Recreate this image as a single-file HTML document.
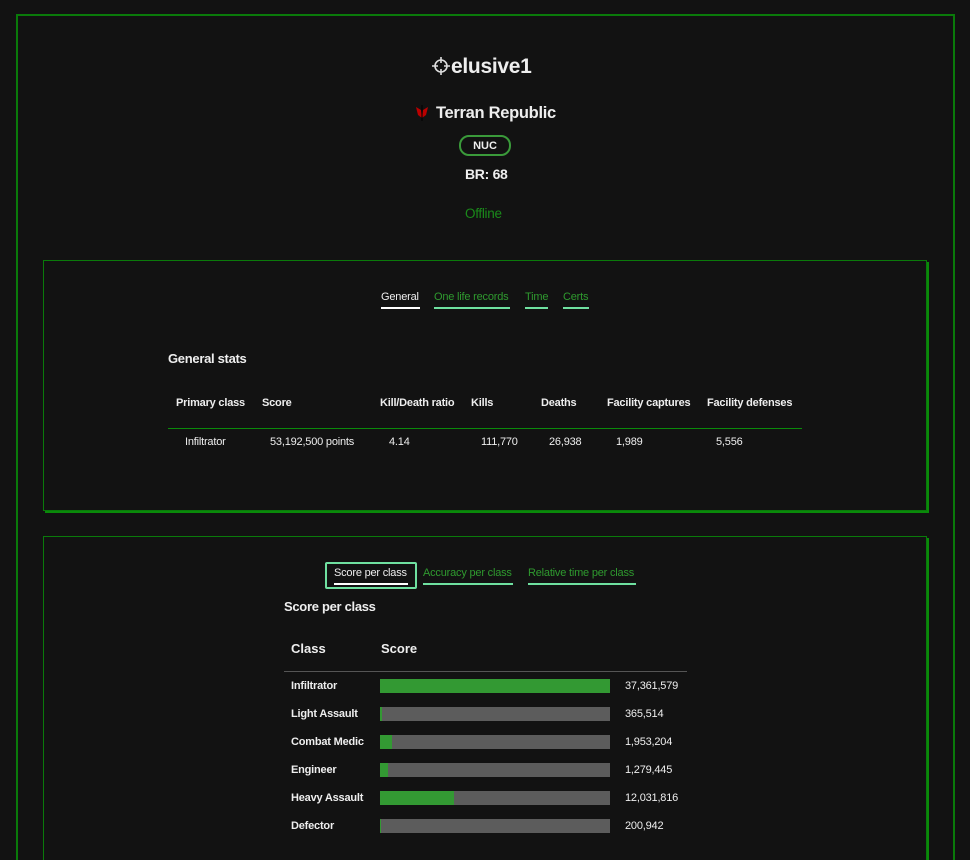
<!DOCTYPE html><html style="overflow:hidden;height:860px"><head><style>
html,body{margin:0;background:#121212;width:970px;height:860px;overflow:hidden}
body{font-family:"Liberation Sans",sans-serif;color:#eee;position:relative}
.a{position:absolute;white-space:nowrap}
.b{font-weight:bold}
.outer{position:absolute;left:16px;top:14px;width:935px;height:860px;border:2px solid #0a7a0a}
.panel{position:absolute;left:43px;width:882px;border:1px solid #0a7a0a;box-shadow:2px 2px 0 #0a8a0a}
.g{color:#2f9a2f}
.ul{position:absolute;height:2px;background:#6fe0a0}
.bar{position:absolute;left:380px;width:230px;height:14px;background:#5c5c5c}
.bar i{display:block;height:100%;background:#339933}
.s11{font-size:11px;letter-spacing:-0.2px}
</style></head><body>
<div class="outer"></div>
<svg class="a" style="left:432px;top:57px" width="18" height="18" viewBox="0 0 18 18" fill="none" stroke="#ddd" stroke-width="1.6"><circle cx="9" cy="9" r="6"/><path d="M9 0v6M9 12v6M0 9h6M12 9h6"/></svg>
<div class="a b" style="left:451px;top:55px;font-size:21px;letter-spacing:-0.3px">elusive1</div>
<svg class="a" style="left:416px;top:105px" width="12" height="16" viewBox="0 0 12 16"><path d="M0 2l5 3 1 9 1-9 5-3-2 8-4 3-4-3z" fill="#b00"/><path d="M6 0v16" stroke="#000" stroke-width="1"/></svg>
<div class="a b" style="left:436px;top:104px;font-size:16.5px;letter-spacing:-0.3px">Terran Republic</div>
<div class="a b" style="left:459px;top:135px;width:48px;height:17px;border:2px solid #3a9a3a;border-radius:10px;font-size:11px;text-align:center;line-height:19px">NUC</div>
<div class="a b" style="left:465px;top:166px;font-size:14px;letter-spacing:-0.3px">BR: 68</div>
<div class="a" style="left:465px;top:206px;font-size:13.5px;color:#1a8a1a;letter-spacing:-0.3px">Offline</div>

<div class="panel" style="top:260px;height:249px"></div>
<div class="a s11" style="left:381px;top:291px">General</div><div class="ul" style="left:381px;top:307px;width:39px;background:#fff"></div>
<div class="a s11 g" style="left:434px;top:291px">One life records</div><div class="ul" style="left:434px;top:307px;width:76px"></div>
<div class="a s11 g" style="left:525px;top:291px">Time</div><div class="ul" style="left:525px;top:307px;width:23px"></div>
<div class="a s11 g" style="left:563px;top:291px">Certs</div><div class="ul" style="left:563px;top:307px;width:26px"></div>
<div class="a b" style="left:168px;top:351px;font-size:13px;letter-spacing:-0.3px">General stats</div>
<div class="a b s11" style="left:176px;top:397px">Primary class</div>
<div class="a b s11" style="left:262px;top:397px">Score</div>
<div class="a b s11" style="left:380px;top:397px">Kill/Death ratio</div>
<div class="a b s11" style="left:471px;top:397px">Kills</div>
<div class="a b s11" style="left:541px;top:397px">Deaths</div>
<div class="a b s11" style="left:607px;top:397px">Facility captures</div>
<div class="a b s11" style="left:707px;top:397px">Facility defenses</div>
<div class="a" style="left:168px;top:428px;width:634px;height:1px;background:#0a8a0a"></div>
<div class="a s11" style="left:185px;top:436px">Infiltrator</div>
<div class="a s11" style="left:270px;top:436px">53,192,500 points</div>
<div class="a s11" style="left:389px;top:436px">4.14</div>
<div class="a s11" style="left:481px;top:436px">111,770</div>
<div class="a s11" style="left:549px;top:436px">26,938</div>
<div class="a s11" style="left:616px;top:436px">1,989</div>
<div class="a s11" style="left:716px;top:436px">5,556</div>

<div class="panel" style="top:536px;height:330px"></div>
<div class="a" style="left:325px;top:562px;width:88px;height:23px;border:2px solid #6fe0a0;border-radius:2px"></div>
<div class="a s11" style="left:334px;top:567px">Score per class</div><div class="ul" style="left:334px;top:583px;width:74px;background:#fff"></div>
<div class="a s11 g" style="left:423px;top:567px">Accuracy per class</div><div class="ul" style="left:423px;top:583px;width:90px"></div>
<div class="a s11 g" style="left:528px;top:567px">Relative time per class</div><div class="ul" style="left:528px;top:583px;width:108px"></div>
<div class="a b" style="left:284px;top:599px;font-size:13px;letter-spacing:-0.3px">Score per class</div>
<div class="a b" style="left:291px;top:641px;font-size:13px">Class</div>
<div class="a b" style="left:381px;top:641px;font-size:13px">Score</div>
<div class="a" style="left:284px;top:671px;width:403px;height:1px;background:#555"></div>

<div class="a b s11" style="left:291px;top:680px">Infiltrator</div><div class="bar" style="top:679px"><i style="width:100%"></i></div><div class="a s11" style="left:625px;top:680px">37,361,579</div>
<div class="a b s11" style="left:291px;top:708px">Light Assault</div><div class="bar" style="top:707px"><i style="width:1%"></i></div><div class="a s11" style="left:625px;top:708px">365,514</div>
<div class="a b s11" style="left:291px;top:736px">Combat Medic</div><div class="bar" style="top:735px"><i style="width:5.2%"></i></div><div class="a s11" style="left:625px;top:736px">1,953,204</div>
<div class="a b s11" style="left:291px;top:764px">Engineer</div><div class="bar" style="top:763px"><i style="width:3.4%"></i></div><div class="a s11" style="left:625px;top:764px">1,279,445</div>
<div class="a b s11" style="left:291px;top:792px">Heavy Assault</div><div class="bar" style="top:791px"><i style="width:32%"></i></div><div class="a s11" style="left:625px;top:792px">12,031,816</div>
<div class="a b s11" style="left:291px;top:820px">Defector</div><div class="bar" style="top:819px"><i style="width:0.6%"></i></div><div class="a s11" style="left:625px;top:820px">200,942</div>
</body></html>
